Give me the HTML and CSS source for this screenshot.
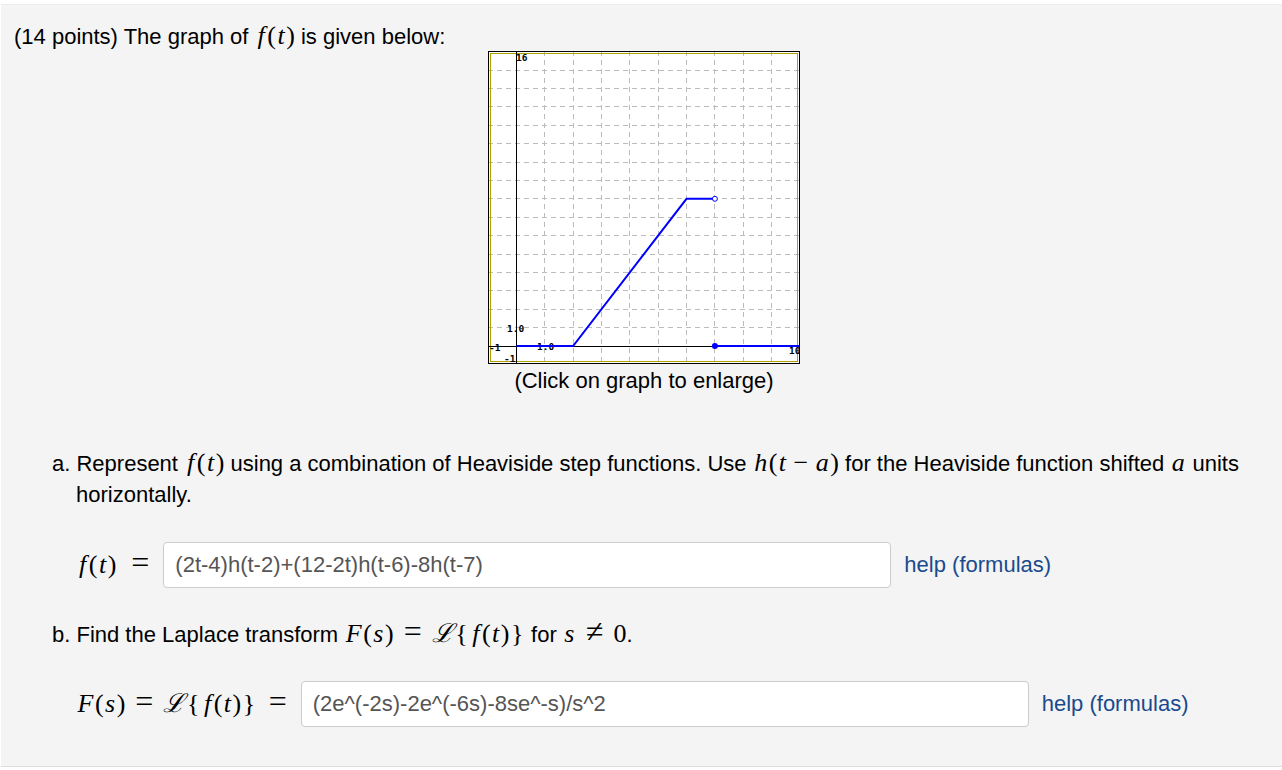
FILE: index.html
```html
<!DOCTYPE html>
<html>
<head>
<meta charset="utf-8">
<link rel="stylesheet" href="styles.css">
</head>
<body>
<div class="panel">
  <p class="title">(14 points) The graph of <span class="m"><i class="f">f</i>(<i>t</i>)</span> is given below:</p>
  <div class="graph-wrap">
    <svg class="graph" width="312" height="313" viewBox="0 0 312 313">
      <rect x="0" y="0" width="312" height="313" fill="#fff"/>
      <g stroke="#bcbcbc" stroke-width="1" stroke-dasharray="5,4">
        <line x1="56.5" y1="0" x2="56.5" y2="313"/>
        <line x1="85.5" y1="0" x2="85.5" y2="313"/>
        <line x1="113.5" y1="0" x2="113.5" y2="313"/>
        <line x1="141.5" y1="0" x2="141.5" y2="313"/>
        <line x1="170.5" y1="0" x2="170.5" y2="313"/>
        <line x1="198.5" y1="0" x2="198.5" y2="313"/>
        <line x1="226.5" y1="0" x2="226.5" y2="313"/>
        <line x1="255.5" y1="0" x2="255.5" y2="313"/>
        <line x1="283.5" y1="0" x2="283.5" y2="313"/>
        <line x1="0" y1="276.5" x2="312" y2="276.5"/>
        <line x1="0" y1="258.5" x2="312" y2="258.5"/>
        <line x1="0" y1="239.5" x2="312" y2="239.5"/>
        <line x1="0" y1="221.5" x2="312" y2="221.5"/>
        <line x1="0" y1="203.5" x2="312" y2="203.5"/>
        <line x1="0" y1="184.5" x2="312" y2="184.5"/>
        <line x1="0" y1="166.5" x2="312" y2="166.5"/>
        <line x1="0" y1="147.5" x2="312" y2="147.5"/>
        <line x1="0" y1="129.5" x2="312" y2="129.5"/>
        <line x1="0" y1="111.5" x2="312" y2="111.5"/>
        <line x1="0" y1="92.5" x2="312" y2="92.5"/>
        <line x1="0" y1="74.5" x2="312" y2="74.5"/>
        <line x1="0" y1="55.5" x2="312" y2="55.5"/>
        <line x1="0" y1="37.5" x2="312" y2="37.5"/>
        <line x1="0" y1="19.5" x2="312" y2="19.5"/>
      </g>
      <rect x="2.5" y="2.5" width="307" height="308" fill="none" stroke="#ada000" stroke-width="1"/>
      <g stroke="#000" stroke-width="1">
        <line x1="28.5" y1="0" x2="28.5" y2="313"/>
        <line x1="0" y1="295.5" x2="312" y2="295.5"/>
      </g>
      <g class="lbl">
        <text x="28" y="10">16</text>
        <text x="19" y="281">1.0</text>
        <text x="49" y="299">1.0</text>
        <text x="1" y="300">-1</text>
        <text x="16" y="311">-1</text>
        <text x="301" y="303">10</text>
      </g>
      <g stroke="#0000ff" stroke-width="2" fill="none">
        <polyline points="28.5,295 85.1,295 198.5,147.8 226.9,147.8"/>
        <line x1="226.9" y1="295" x2="312" y2="295"/>
      </g>
      <circle cx="226.9" cy="147.8" r="2.5" fill="#fff" stroke="#0000ff" stroke-width="1"/>
      <circle cx="226.9" cy="295" r="3" fill="#0000ff"/>
      <rect x="0.5" y="0.5" width="311" height="312" fill="none" stroke="#000" stroke-width="1"/>
    </svg>
    <div class="caption">(Click on graph to enlarge)</div>
  </div>

  <div class="part part-a">
    <p class="item">a. Represent <span class="m"><i class="f">f</i>(<i>t</i>)</span> using a combination of Heaviside step functions. Use <span class="m"><i>h</i>(<i>t</i><span class="bin">−</span><i>a</i>)</span> for the Heaviside function shifted <span class="m"><i>a</i></span> units horizontally.</p>
    <div class="answer answer-a">
      <span class="m lbl-m"><i class="f">f</i>(<i>t</i>)<span class="rel">=</span></span>
      <input class="box" type="text" value="(2t-4)h(t-2)+(12-2t)h(t-6)-8h(t-7)">
      <a class="help" href="#">help (formulas)</a>
    </div>
  </div>

  <div class="part part-b">
    <p class="item">b. Find the Laplace transform <span class="m"><i>F</i>(<i>s</i>)<span class="rel">=</span><span class="cal">ℒ</span><span class="br">{</span><i class="f">f</i>(<i>t</i>)<span class="br">}</span></span> for <span class="m"><i>s</i><span class="rel">≠</span>0</span>.</p>
    <div class="answer">
      <span class="m lbl-m"><i>F</i>(<i>s</i>)<span class="rel">=</span><span class="cal">ℒ</span><span class="br">{</span><i class="f">f</i>(<i>t</i>)<span class="br">}</span><span class="rel">=</span></span>
      <input class="box" type="text" value="(2e^(-2s)-2e^(-6s)-8se^-s)/s^2">
      <a class="help" href="#">help (formulas)</a>
    </div>
  </div>
</div>
</body>
</html>
```

FILE: styles.css
```css
html, body {
  margin: 0;
  padding: 0;
  background: #fff;
}
body {
  font-family: "Liberation Sans", Arial, sans-serif;
  font-size: 22px;
  color: #000;
}
.panel {
  margin: 4px 0 0 1px;
  background: #f4f4f4;
  border-top: 1px solid #ececec;
  border-bottom: 1px solid #dcdcdc;
  padding: 18px 8px 0 13px;
  height: 743px;
}
.title {
  margin: 0;
  line-height: 26px;
}
.m {
  font-family: "Liberation Serif", "DejaVu Serif", serif;
  font-size: 26px;
  white-space: nowrap;
}
.m i {
  font-style: italic;
  margin: 0 1.5px;
}
.m i.f {
  margin-left: 3px;
  margin-right: 2.5px;
}
.rel {
  margin: 0 10px;
  font-size: 32px;
  line-height: 16px;
}
.bin {
  margin: 0 6px;
}
.br {
  margin: 0 1.5px;
}
.cal {
  font-family: "DejaVu Serif", "Liberation Serif", serif;
  font-style: italic;
  font-size: 26px;
  line-height: 16px;
}
.graph-wrap {
  display: flex;
  flex-direction: column;
  align-items: center;
}
.graph {
  display: block;
  margin-top: 1px;
}
.lbl text {
  font-family: "DejaVu Sans Mono", "Liberation Mono", monospace;
  font-size: 9.5px;
  font-weight: bold;
  fill: #000;
}
.caption {
  margin-top: 2px;
  line-height: 30px;
}
.part {
  padding-left: 38px;
}
.part-a {
  margin-top: 52px;
}
.part-b {
  margin-top: 31px;
}
.item {
  margin: 0;
  line-height: 30.8px;
  padding-left: 24px;
  text-indent: -24px;
}
.answer {
  display: flex;
  align-items: center;
  padding-left: 24px;
  margin-top: 31px;
}
.lbl-m .rel:last-child {
  margin-left: 12px;
  margin-right: 0;
}
.answer-a .lbl-m .rel:last-child {
  margin-left: 15px;
}
.lbl-m {
  margin-right: 14px;
}
.box {
  box-sizing: border-box;
  width: 728px;
  height: 46px;
  border: 1px solid #cccccc;
  border-radius: 4px;
  background: #fff;
  padding: 0 11px;
  font-family: "Liberation Sans", Arial, sans-serif;
  font-size: 22px;
  color: #555;
  outline: none;
}
.help {
  margin-left: 13px;
  color: #1a4a8e;
  text-decoration: none;
}
```
